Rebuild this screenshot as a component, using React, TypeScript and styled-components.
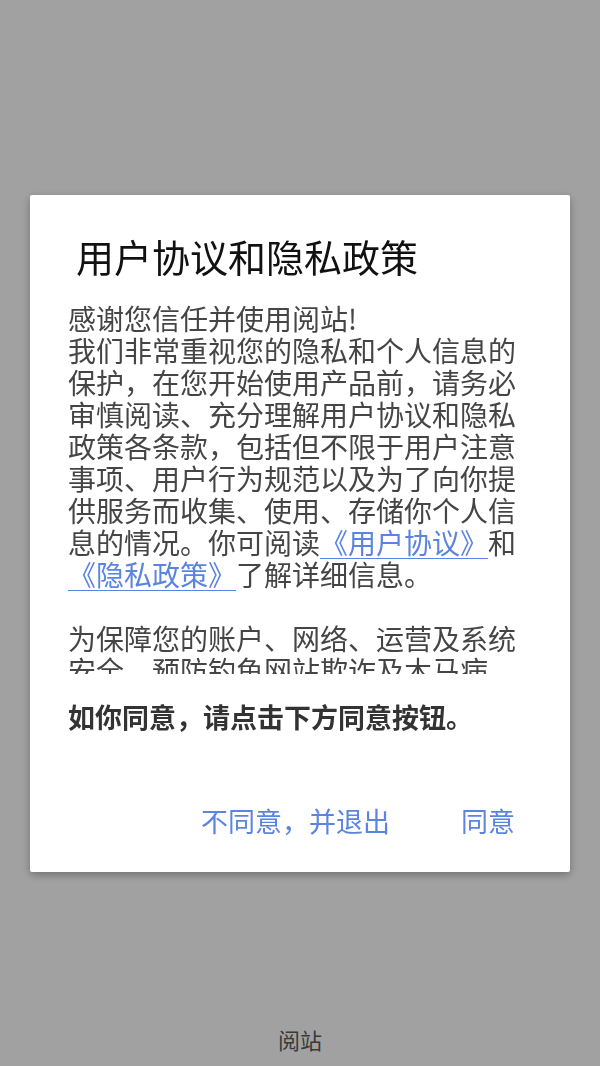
import React from 'react'
import styled, { createGlobalStyle } from 'styled-components'

const GlobalStyle = createGlobalStyle`
  html, body {
    margin: 0;
    padding: 0;
  }
  body {
    font-family: "Noto Sans CJK SC", "Noto Sans", sans-serif;
    background: #fff;
  }
`

const Splash = styled.div`
  position: relative;
  height: 100vh;
  display: flex;
  flex-direction: column;
  justify-content: flex-end;
  align-items: center;
  background: #fff;
`

const Brand = styled.div`
  font-size: 22px;
  line-height: 30px;
  color: #5c5c5c;
  margin-bottom: 12px;
`

const Backdrop = styled.div`
  position: fixed;
  inset: 0;
  background: rgba(0, 0, 0, 0.37);
  display: flex;
  align-items: center;
  justify-content: center;
`

const Dialog = styled.div`
  width: 540px;
  box-sizing: border-box;
  background: #fff;
  border-radius: 2px;
  box-shadow: 0 3px 8px rgba(0, 0, 0, 0.3);
  padding: 37px 38px 35px;
  display: flex;
  flex-direction: column;
`

const Title = styled.h2`
  margin: 0 0 0 8px;
  font-size: 38px;
  line-height: 48px;
  font-weight: 400;
  color: #111;
`

const Scroll = styled.div`
  margin-top: 22px;
  height: 372px;
  overflow-y: auto;
  scrollbar-width: none;
  font-size: 28px;
  line-height: 32px;
  color: #454545;

  p {
    margin: 0;
  }
  p + p {
    margin-top: 32px;
  }
`

const Link = styled.a`
  color: #5b84e0;
  text-decoration: underline;
  text-underline-offset: 4px;
  text-decoration-thickness: 1px;
`

const Notice = styled.div`
  margin-top: 27px;
  font-size: 27px;
  line-height: 32px;
  font-weight: 700;
  color: #333;
`

const Actions = styled.div`
  margin-top: 72px;
  display: flex;
  justify-content: flex-end;
  gap: 71px;
  padding-right: 17px;
`

const Action = styled.button`
  border: none;
  background: none;
  padding: 0;
  font-family: inherit;
  font-size: 27px;
  line-height: 32px;
  color: #5b84e0;
  cursor: pointer;
`

export default function App() {
  return (
    <>
      <GlobalStyle />
      <Splash>
        <Brand>阅站</Brand>
        <Backdrop>
          <Dialog>
            <Title>用户协议和隐私政策</Title>
            <Scroll>
              <p>
                感谢您信任并使用阅站!
                <br />
                我们非常重视您的隐私和个人信息的保护，在您开始使用产品前，请务必审慎阅读、充分理解用户协议和隐私政策各条款，包括但不限于用户注意事项、用户行为规范以及为了向你提供服务而收集、使用、存储你个人信息的情况。你可阅读
                <Link href="#">《用户协议》</Link>和<Link href="#">《隐私政策》</Link>了解详细信息。
              </p>
              <p>
                为保障您的账户、网络、运营及系统安全，预防钓鱼网站欺诈及木马病毒，我们会收集您的设备信息、操作日志等必要信息。我们会严格按照法律法规保护您的个人信息安全。
              </p>
            </Scroll>
            <Notice>如你同意，请点击下方同意按钮。</Notice>
            <Actions>
              <Action>不同意，并退出</Action>
              <Action>同意</Action>
            </Actions>
          </Dialog>
        </Backdrop>
      </Splash>
    </>
  )
}
